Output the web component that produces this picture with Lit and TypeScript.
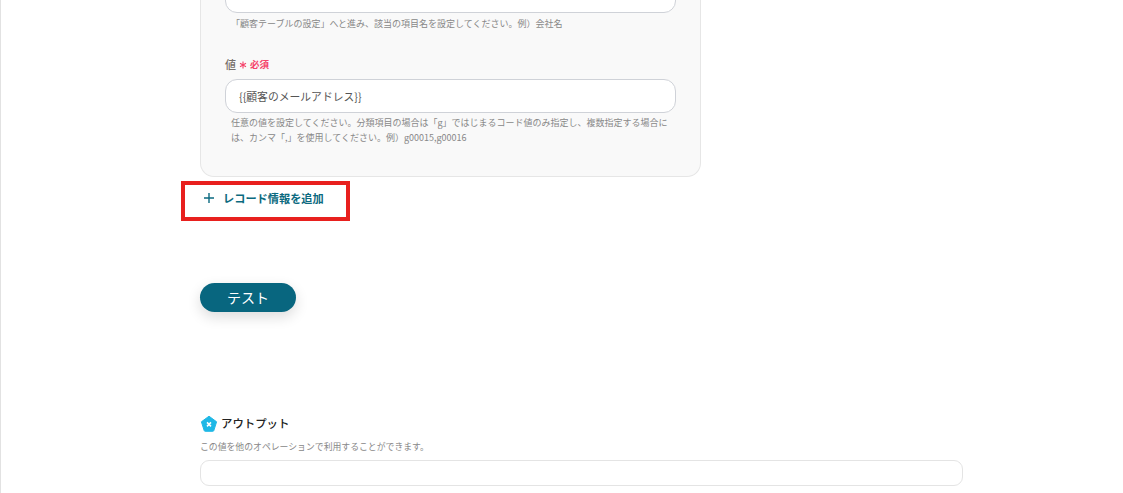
import { LitElement, html, css } from "lit";
import { customElement } from "lit/decorators.js";

@customElement("app-root")
export class AppRoot extends LitElement {
  static styles = css`
    :host {
      display: block;
      height: 493px;
      overflow: hidden;
      position: relative;
      background: #fff;
      font-family: "Noto Sans CJK JP", "Noto Sans", sans-serif;
      color: #333;
    }
    .page {
      display: flow-root;
      box-sizing: border-box;
      height: 493px;
      border-left: 1px solid #e2e2e2;
      padding-left: 199px;
    }
    .card {
      box-sizing: border-box;
      width: 501px;
      height: 198px;
      margin-top: -21px;
      padding: 0 24px;
      background: #f9f9f9;
      border: 1px solid #e6e6e6;
      border-top: 0;
      border-radius: 0 0 14px 14px;
    }
    .input {
      box-sizing: border-box;
      height: 34px;
      padding: 0 13px;
      background: #fff;
      border: 1px solid #cfd2d8;
      border-radius: 12px;
      display: flex;
      align-items: center;
      font-size: 10.8px;
      color: #555;
    }
    .hint {
      margin: 3px 6px 0;
      font-size: 9px;
      line-height: 15px;
      color: #888;
    }
    .hint.value {
      margin-top: 2px;
    }
    .label {
      display: flex;
      align-items: center;
      height: 16px;
      margin-top: 25px;
      margin-bottom: 7px;
      font-size: 11px;
      font-weight: 500;
      color: #77706a;
    }
    .star {
      margin: 2px 3px 0 3px;
    }
    .req {
      font-size: 9.5px;
      font-weight: 700;
      color: #f5436a;
    }
    .add {
      display: flex;
      align-items: center;
      height: 16px;
      margin-top: 13px;
      padding-left: 3px;
      font-size: 11.2px;
      font-weight: 700;
      color: #0b6a80;
    }
    .add svg {
      margin-right: 8px;
    }
    .test {
      display: flex;
      align-items: center;
      justify-content: center;
      box-sizing: border-box;
      width: 96px;
      height: 29px;
      margin-top: 77px;
      padding-bottom: 2px;
      border-radius: 15px;
      background: #08667f;
      box-shadow: 0 5px 14px rgba(0, 0, 0, 0.14);
      color: #fff;
      font-size: 14px;
    }
    .output {
      display: flex;
      align-items: center;
      height: 18px;
      margin-top: 102px;
      font-size: 11.4px;
      font-weight: 500;
      color: #222;
    }
    .output svg {
      margin: 1px 3px 0 0;
    }
    .desc {
      margin-top: 8px;
      font-size: 8.85px;
      line-height: 14px;
      color: #888;
    }
    .box {
      box-sizing: border-box;
      width: 763px;
      height: 26px;
      margin-top: 6px;
      border: 1px solid #e4e4e4;
      border-radius: 9px;
    }
    .mark {
      position: absolute;
      left: 181px;
      top: 181px;
      box-sizing: border-box;
      width: 169px;
      height: 40px;
      border: 4px solid #e8201e;
    }
  `;

  render() {
    return html`
      <div class="page">
        <div class="card">
          <div class="input"></div>
          <p class="hint">「顧客テーブルの設定」へと進み、該当の項目名を設定してください。例）会社名</p>
          <div class="label">
            値
            <svg class="star" width="8" height="8" viewBox="0 0 8 8">
              <path d="M4 .5v7M1 2.2l6 3.6M7 2.2 1 5.8" stroke="#f5436a" stroke-width="1.1" fill="none" />
            </svg>
            <span class="req">必須</span>
          </div>
          <div class="input">{{顧客のメールアドレス}}</div>
          <p class="hint value">
            任意の値を設定してください。分類項目の場合は「g」ではじまるコード値のみ指定し、複数指定する場合には、カンマ「,」を使用してください。例）g00015,g00016
          </p>
        </div>
        <div class="add">
          <svg width="12" height="12" viewBox="0 0 12 12">
            <path d="M6 1v10M1 6h10" stroke="#0b6a80" stroke-width="1.4" fill="none" />
          </svg>
          レコード情報を追加
        </div>
        <div class="test">テスト</div>
        <div class="output">
          <svg width="18" height="18" viewBox="0 0 18 18">
            <path
              d="M9 1.2 16.6 6.8 13.8 15.6a1 1 0 0 1-1 .7H5.2a1 1 0 0 1-1-.7L1.4 6.8Z"
              fill="#1fb8e6"
              stroke="#1fb8e6"
              stroke-linejoin="round"
            />
            <path d="M7 7.4 11 11.4M11 7.4 7 11.4" stroke="#fff" stroke-width="1.5" />
          </svg>
          アウトプット
        </div>
        <div class="desc">この値を他のオペレーションで利用することができます。</div>
        <div class="box"></div>
      </div>
      <div class="mark"></div>
    `;
  }
}
